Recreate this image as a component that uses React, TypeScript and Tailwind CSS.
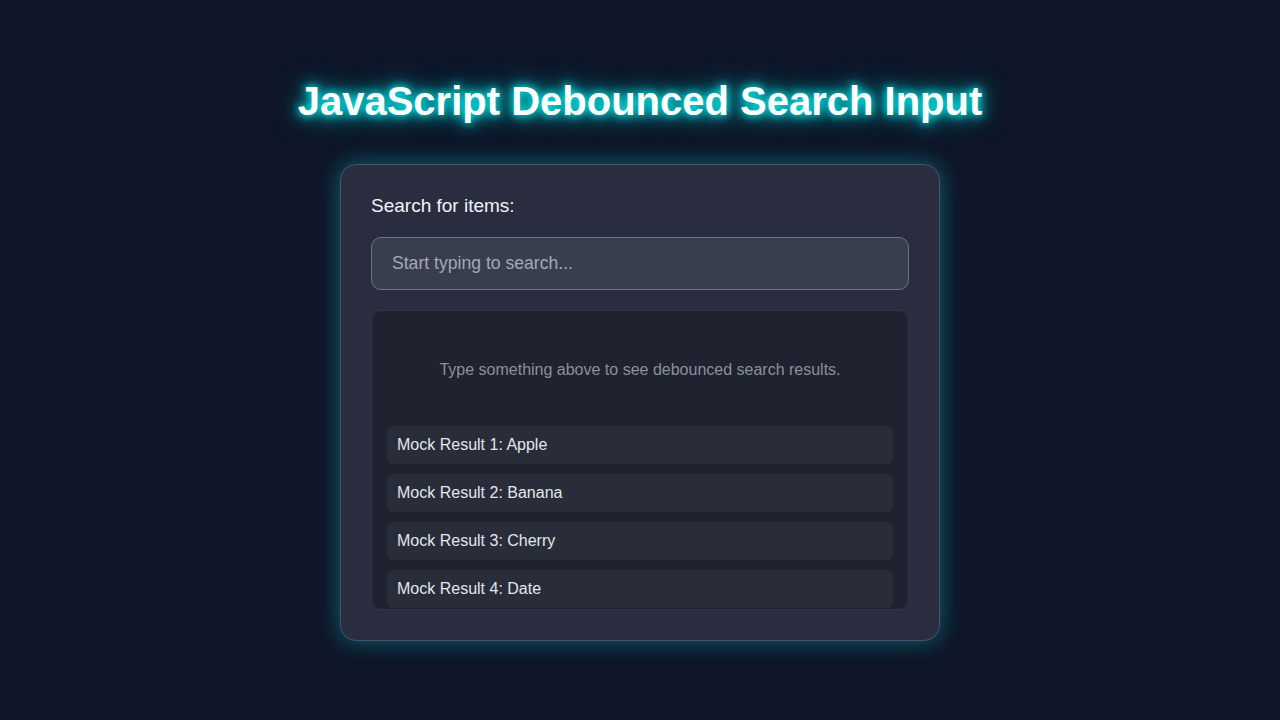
import React from 'react';

const results = ['Apple', 'Banana', 'Cherry', 'Date'];

const App: React.FC = () => {
  return (
    <div className="min-h-screen bg-[#0e1628] flex flex-col items-center pt-[76px] font-['Liberation_Sans',Arial,sans-serif]">
      {/* Glowing title */}
      <h1 className="text-[40px] leading-[50px] font-bold text-white mb-[38px] [text-shadow:0_0_8px_#00ffff,0_0_16px_#00e0e0,0_0_30px_rgba(0,200,210,0.7)]">
        JavaScript Debounced Search Input
      </h1>

      <div className="w-[600px] bg-[#292d3f] border border-[#4a5163] rounded-2xl p-[30px] shadow-[0_0_22px_rgba(0,200,210,0.45)]">
        <label className="block text-[19px] leading-[22px] text-[#f2f4f8] mb-5">Search for items:</label>
        <input
          type="text"
          placeholder="Start typing to search..."
          className="w-full h-[53px] px-5 bg-[#393e4e] border border-[#6d7384] rounded-[10px] text-[17.6px] text-white placeholder:text-[#a3a8b4] outline-none"
        />

        {/* Results panel */}
        <div className="mt-5 h-[300px] overflow-hidden bg-[#1f222f] border border-[#323747] rounded-[10px] p-[15px]">
          <p className="pt-[34px] pb-[36px] text-center text-[16px] leading-5 text-[#8c909c]">
            Type something above to see debounced search results.
          </p>
          <ul className="flex flex-col gap-[10px] mt-[10px]">
            {results.map((r, i) => (
              <li
                key={r}
                className="h-[38px] flex items-center px-[10px] bg-[#292d39] rounded-md text-[16px] text-[#e3e6ec]"
              >
                Mock Result {i + 1}: {r}
              </li>
            ))}
          </ul>
        </div>
      </div>
    </div>
  );
};

export default App;
